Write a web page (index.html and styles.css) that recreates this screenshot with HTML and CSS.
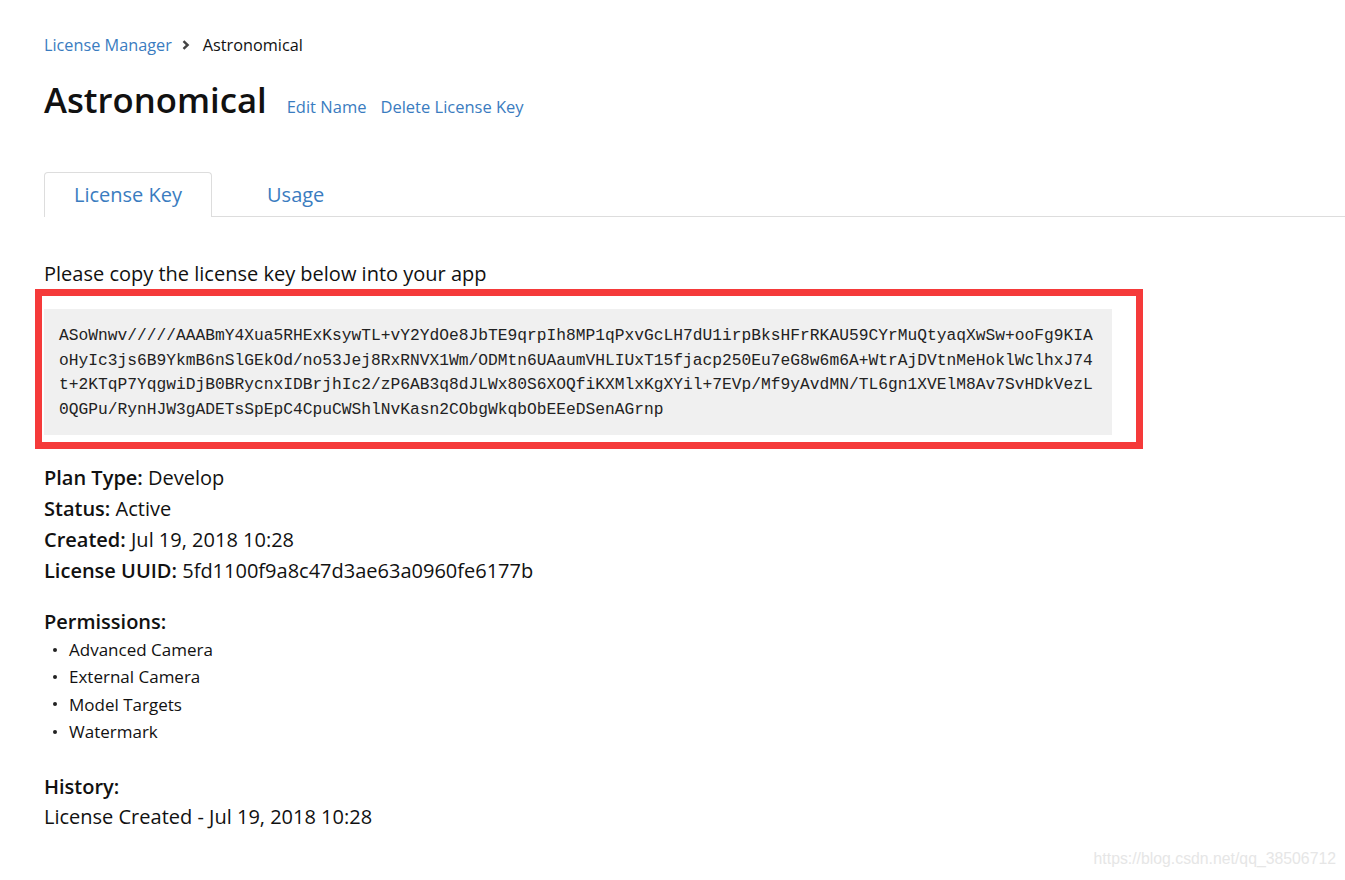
FILE: index.html
```html
<!DOCTYPE html>
<html lang="en">
<head>
<meta charset="utf-8">
<title>Astronomical - License Manager</title>
<link rel="stylesheet" href="styles.css">
</head>
<body>
<div class="page">
  <nav class="breadcrumb">
    <a class="crumb-link" href="#">License Manager</a>
    <svg class="crumb-sep" width="8" height="10" viewBox="0 0 8 10"><path d="M1.5 1.2 L5.6 5 L1.5 8.8" fill="none" stroke="#444" stroke-width="2.4"/></svg>
    <span class="crumb-current">Astronomical</span>
  </nav>
  <div class="title-row">
    <h1 class="title">Astronomical</h1>
    <a class="title-action" href="#">Edit Name</a>
    <a class="title-action" href="#">Delete License Key</a>
  </div>
  <div class="tabs">
    <a class="tab tab-active" href="#">License Key</a>
    <a class="tab" href="#">Usage</a>
  </div>
  <p class="intro">Please copy the license key below into your app</p>
  <div class="key-wrap">
    <pre class="key">ASoWnwv/////AAABmY4Xua5RHExKsywTL+vY2YdOe8JbTE9qrpIh8MP1qPxvGcLH7dU1irpBksHFrRKAU59CYrMuQtyaqXwSw+ooFg9KIAoHyIc3js6B9YkmB6nSlGEkOd/no53Jej8RxRNVX1Wm/ODMtn6UAaumVHLIUxT15fjacp250Eu7eG8w6m6A+WtrAjDVtnMeHoklWclhxJ74t+2KTqP7YqgwiDjB0BRycnxIDBrjhIc2/zP6AB3q8dJLWx80S6XOQfiKXMlxKgXYil+7EVp/Mf9yAvdMN/TL6gn1XVElM8Av7SvHDkVezL0QGPu/RynHJW3gADETsSpEpC4CpuCWShlNvKasn2CObgWkqbObEEeDSenAGrnp</pre>
    <div class="highlight"></div>
  </div>
  <div class="details">
    <div class="detail"><b>Plan Type:</b> Develop</div>
    <div class="detail"><b>Status:</b> Active</div>
    <div class="detail"><b>Created:</b> Jul 19, 2018 10:28</div>
    <div class="detail"><b>License UUID:</b> 5fd1100f9a8c47d3ae63a0960fe6177b</div>
  </div>
  <h3 class="section-title">Permissions:</h3>
  <ul class="perms">
    <li>Advanced Camera</li>
    <li>External Camera</li>
    <li>Model Targets</li>
    <li>Watermark</li>
  </ul>
  <h3 class="section-title history-title">History:</h3>
  <div class="history">License Created - Jul 19, 2018 10:28</div>
</div>
<div class="watermark">https://blog.csdn.net/qq_38506712</div>
</body>
</html>
```
FILE: styles.css
```css
html, body {
  margin: 0;
  padding: 0;
  background: #fff;
}
body {
  font-family: "Open Sans", "Noto Sans", sans-serif;
  color: #111;
  position: relative;
  min-height: 880px;
}
a {
  text-decoration: none;
  color: #3a7cc0;
}
.page {
  padding: 33px 0 0 44px;
}
.breadcrumb {
  display: flex;
  align-items: center;
  font-size: 16.25px;
  line-height: 24px;
}
.crumb-sep {
  margin: 0 13px 0 10px;
}
.crumb-current {
  color: #111;
}
.title-row {
  display: flex;
  align-items: baseline;
  margin-top: 18px;
}
.title {
  margin: 0;
  font-size: 34.7px;
  font-weight: 600;
  line-height: 50px;
  margin-right: 20px;
}
.title-action {
  font-size: 16.5px;
  margin-right: 14px;
}
.tabs {
  display: flex;
  margin-top: 47px;
  border-bottom: 1px solid #ddd;
}
.tab {
  display: block;
  font-size: 20px;
  line-height: 26px;
  padding: 9px 29px 8px 29px;
  border: 1px solid transparent;
  border-bottom: none;
  margin-bottom: -1px;
  border-radius: 4px 4px 0 0;
}
.tab-active {
  border-color: #ddd;
  background: #fff;
  padding-bottom: 9px;
}
.tab + .tab {
  margin-left: 25px;
}
.intro {
  margin: 43px 0 0 0;
  font-size: 20px;
  line-height: 28px;
}
.key-wrap {
  position: relative;
  width: 1068px;
  margin-top: 21px;
}
.key {
  margin: 0;
  background: #f0f0f0;
  font-family: "Liberation Mono", "Courier New", monospace;
  font-size: 16.25px;
  line-height: 24.5px;
  padding: 15px 15px 13px 15px;
  white-space: pre-wrap;
  word-break: break-all;
  color: #222;
}
.highlight {
  position: absolute;
  top: -20px;
  left: -9px;
  right: -31px;
  bottom: -14px;
  border: 7px solid #f53a3a;
  pointer-events: none;
}
.details {
  margin-top: 27px;
  font-size: 20px;
  line-height: 31px;
}
.detail b {
  font-weight: 600;
}
.section-title {
  margin: 22px 0 0 0;
  font-size: 20px;
  font-weight: 600;
  line-height: 28px;
}
.perms {
  list-style: none;
  margin: 0;
  padding: 0;
  font-size: 17px;
  line-height: 27.3px;
}
.perms li {
  display: flex;
  align-items: center;
}
.perms li::before {
  content: "";
  width: 4px;
  height: 4px;
  border-radius: 50%;
  background: #222;
  margin: 0 12px 0 9px;
}
.history-title {
  margin-top: 28px;
}
.history {
  font-size: 20px;
  line-height: 32px;
}
.watermark {
  position: absolute;
  right: 9px;
  top: 850px;
  font-family: "Liberation Sans", Arial, sans-serif;
  font-size: 15.8px;
  color: #e6e6e6;
}
```
